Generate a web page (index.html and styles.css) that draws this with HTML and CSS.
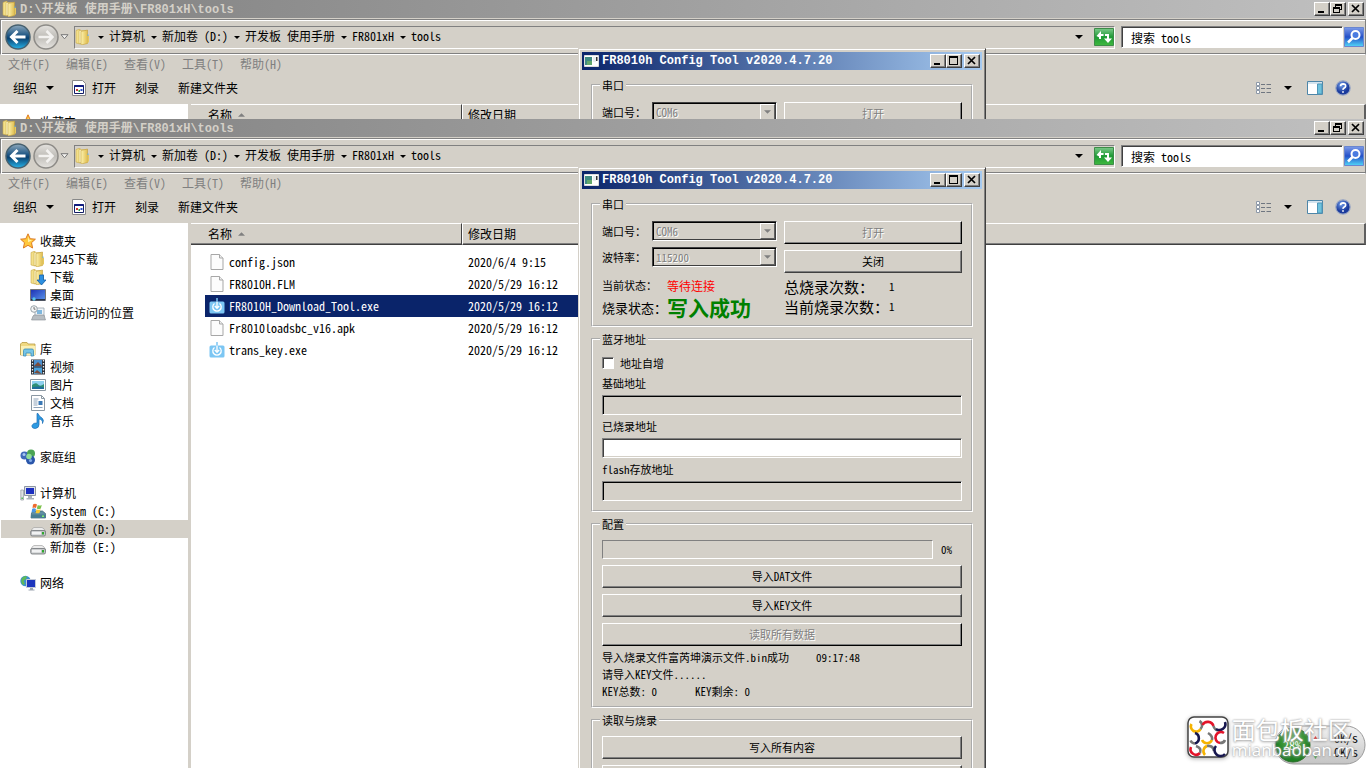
FILE: index.html
```html
<!DOCTYPE html>
<html lang="zh-CN">
<head>
<meta charset="utf-8">
<title>FR8010h Config Tool</title>
<link rel="stylesheet" href="styles.css">
</head>
<body>
<svg class="defs" aria-hidden="true">
  <defs>
    <linearGradient id="gold" x1="0" x2="1"><stop offset="0" stop-color="#fdf3b0"/><stop offset="1" stop-color="#e0bd4e"/></linearGradient>
    <linearGradient id="blueball" x1="0" y1="0" x2="0" y2="1"><stop offset="0" stop-color="#8ea9bd"/><stop offset=".45" stop-color="#1d5583"/><stop offset=".55" stop-color="#0b4170"/><stop offset="1" stop-color="#27b4ea"/></linearGradient>
    <linearGradient id="greyball" x1="0" y1="0" x2="0" y2="1"><stop offset="0" stop-color="#e4e2de"/><stop offset=".5" stop-color="#bfbdb8"/><stop offset="1" stop-color="#e6e4e0"/></linearGradient>
    <linearGradient id="screen" x1="0" y1="0" x2="1" y2="1"><stop offset="0" stop-color="#1b2fb4"/><stop offset="1" stop-color="#5d97ea"/></linearGradient>
    <linearGradient id="greenbtn" x1="0" y1="0" x2="0" y2="1"><stop offset="0" stop-color="#7cc98a"/><stop offset=".5" stop-color="#1f9a35"/><stop offset="1" stop-color="#3fb83f"/></linearGradient>
    <linearGradient id="searchbtn" x1="0" y1="0" x2="0" y2="1"><stop offset="0" stop-color="#7d9be8"/><stop offset=".5" stop-color="#2450c8"/><stop offset="1" stop-color="#52d6f8"/></linearGradient>
    <radialGradient id="helpball" cx=".4" cy=".3"><stop offset="0" stop-color="#6f9be8"/><stop offset="1" stop-color="#1a3a9c"/></radialGradient>
    <radialGradient id="gauge" cx=".5" cy=".35"><stop offset="0" stop-color="#6dbb5e"/><stop offset="1" stop-color="#1d7f22"/></radialGradient>
    <linearGradient id="pill" x1="0" y1="0" x2="0" y2="1"><stop offset="0" stop-color="#f2f2f2"/><stop offset="1" stop-color="#c4c4c4"/></linearGradient>
  </defs>
  <symbol id="i-folder" viewBox="0 0 16 16"><path d="M1 1.5 5 0v15l-4-1z" fill="#f3e08a" stroke="#c9a94a" stroke-width=".6"/><path d="M4 1.5h7v13H4z" fill="#fbf2c0" stroke="#cfae4f" stroke-width=".6"/><path d="M6 2.5 12.5 1v13.500L6 16z" fill="url(#gold)" stroke="#c39d3a" stroke-width=".6"/><path d="M12.500 6.500 14 7v6l-1.500 1.500z" fill="#e6c75c"/><path d="M12.500 5.500h1v1.500h-1z" fill="#5fb0e0"/></symbol>
  <symbol id="i-down" viewBox="0 0 16 16"><use href="#i-folder"/><path d="M9.500 6h4v5H16l-4.500 5L7 11h2.500z" fill="#2d8fe0" stroke="#145ea8" stroke-width=".8"/></symbol>
  <symbol id="i-star" viewBox="0 0 16 16"><path d="m8 .8 2.200 4.900 5.200.5-3.900 3.500 1.100 5.300L8 12.300 3.400 15l1.100-5.300L.6 6.200l5.200-.5z" fill="#ffc83c" stroke="#dd7a22" stroke-width="1"/><path d="m8 3.500 1.200 3.200 3 .5-4.200 2z" fill="#fff2a8"/></symbol>
  <symbol id="i-desk" viewBox="0 0 16 16"><path d="M.5 2.500h15v11H.5z" fill="url(#screen)" stroke="#777"/><path d="M1 12h14v1.500H1z" fill="#26334c"/><circle cx="4" cy="12" r="1.700" fill="#58c5e8"/></symbol>
  <symbol id="i-recent" viewBox="0 0 16 16"><path d="M5 3h9v9H5z" fill="#eef4f8" stroke="#9aa5ae" stroke-width=".8"/><path d="M7 5h5v4H7z" fill="#7fb7dd"/><path d="m3 11 1-1h10l1.500 5H1.500z" fill="#b7bdc2" stroke="#848b90" stroke-width=".6"/><circle cx="4" cy="4" r="3.300" fill="#f4f6f7" stroke="#8f9aa0" stroke-width=".9"/><path d="M4 2v2.200h1.500" fill="none" stroke="#555" stroke-width=".8"/></symbol>
  <symbol id="i-lib" viewBox="0 0 16 16"><path d="M.5 3 2 1.500h5L8 3h7v11H.5z" fill="#f0d982" stroke="#b99c44" stroke-width=".8"/><path d="M1 5h14.500L15 14H1z" fill="#fbf0b5"/><path d="M3.500 15V9.500Q3.500 8 5 8h7q1.500 0 1.500 1.500V15h-2.500v-3H6v3z" fill="#76c4e6" stroke="#3a8db8" stroke-width=".8"/></symbol>
  <symbol id="i-video" viewBox="0 0 16 16"><path d="M1 .5h14v15H1z" fill="#2a2f38"/><path d="M4 1h8v6.500H4z" fill="#4b8fce"/><path d="M4 8.500h8V15H4z" fill="#4aa2dc"/><path d="m4 7 4-4 4 4zM4 14l3-3 5 4z" fill="#7a4b3b"/><path d="M2.500 1v14M13.500 1v14" stroke="#eee" stroke-width="1.300" stroke-dasharray="1.500 1.500"/></symbol>
  <symbol id="i-pic" viewBox="0 0 16 16"><path d="M.5 2.500h15v11H.5z" fill="#fff" stroke="#8b98a3"/><path d="M2 4h12v8H2z" fill="#8fd0ef"/><path d="M2 8q4-3 6-.5T14 7v5H2z" fill="#2f8f74"/><path d="M2 10.500q6-2 12 0V12H2z" fill="#1f6d9c"/></symbol>
  <symbol id="i-doc" viewBox="0 0 16 16"><path d="M1.500.5h10l3 3v12h-13z" fill="#fff" stroke="#8b98a3"/><path d="M11.500.5v3h3" fill="none" stroke="#8b98a3"/><path d="M3.500 4h5M3.500 6h4M3.500 8h4M3.500 10h4M3.500 12.500h9" stroke="#8da2b8"/><path d="M8.500 6h4v4h-4z" fill="#3a78b5"/></symbol>
  <symbol id="i-music" viewBox="0 0 16 16"><path d="M8 .5q1 3 4 4.500 2.500 2 .5 5.500.5-4-3.500-4.500v5.500Q9 15 5.500 15.500 1.500 15.500 2 12.500q1-3 5-2.500V.5z" fill="#2e9be2" stroke="#1a6cb4" stroke-width=".7"/></symbol>
  <symbol id="i-home" viewBox="0 0 16 16"><circle cx="4.500" cy="6.500" r="4" fill="#3f69b9"/><circle cx="11" cy="4.500" r="4" fill="#4ba455"/><circle cx="10.500" cy="11" r="4.500" fill="#2a56aa"/><circle cx="9" cy="7.500" r="2.800" fill="#8fdc97"/><circle cx="4" cy="5.500" r="1.500" fill="#a8c7f2"/><circle cx="10.500" cy="11.500" r="1.600" fill="#7fa8e6"/></symbol>
  <symbol id="i-pc" viewBox="0 0 16 16"><path d="M4.500 1.500h11v9h-11z" fill="#dfe3ea" stroke="#8c95a2"/><path d="M6 3h8v6H6z" fill="#1b2ec0"/><path d="M8 11h4v2h2v1.500H6.500V13H8z" fill="#aab2bd"/><path d="M.8 5h2.700v10H.8z" fill="#dde0e4" stroke="#8f979f" stroke-width=".7"/><path d="M1.500 12.500h1.300V14H1.500z" fill="#36b03c"/></symbol>
  <symbol id="i-sys" viewBox="0 0 16 16"><path d="m1.500 10 2-2h9l3 2.500V15H1z" fill="#5f8fa3" stroke="#3b6272" stroke-width=".7"/><path d="M1 11.500h14.500V15H1z" fill="#487d92"/><path d="M12 12.500h2v1.500h-2z" fill="#7cf06c"/><path d="M3 1.500Q5 0 7 1.500L6 5Q4.500 4 2.500 5z" fill="#ee6a2e"/><path d="M7.800 2q2 1.200 4 0l-1 3.500q-2 1-4 0z" fill="#7cc24c"/><path d="M2.200 5.700q2-1 3.800.3L5 9.500q-2-1-3.500 0z" fill="#4a96e4"/><path d="M6.600 6.200q2 1 4 0l-1 3.500q-2 1-4 0z" fill="#f6c732"/></symbol>
  <symbol id="i-drive" viewBox="0 0 16 16"><path d="M1 10.500Q2 7 4 6.500h8q2 .5 3.500 4z" fill="#ececec" stroke="#999" stroke-width=".6"/><rect x=".7" y="9.500" width="14.800" height="5.500" rx="1.500" fill="#c3c5c7" stroke="#6f7376" stroke-width=".8"/><path d="M2 10.800h9v2.700H2z" fill="#f1f2f3"/><path d="M12 11h2v2.500h-2z" fill="#2fa82e"/></symbol>
  <symbol id="i-net" viewBox="0 0 16 16"><circle cx="5.500" cy="6" r="5.200" fill="#3b8fd1"/><path d="M2 3q3-3 5-1.500L6 4 3.500 6 5 9l-2 1Q0 7 2 3z" fill="#5fba58"/><path d="M6.500 4.500h9v8h-9z" fill="#1d35bd" stroke="#c4cad6"/><path d="M10 13h3v1.500h1.500v1h-6v-1H10z" fill="#9da6b2"/></symbol>
  <symbol id="i-file" viewBox="0 0 16 16"><path d="M2 .5h8.500l3.500 3.500v11.500H2z" fill="#fcfcfc" stroke="#a7a7a7"/><path d="M10.500.5V4H14" fill="#eee" stroke="#a7a7a7"/></symbol>
  <symbol id="i-exe" viewBox="0 0 16 16"><path d="M.5 5q0-1.500 1.500-1.500h12q1.500 0 1.500 1.500v9q0 1.500-1.500 1.500H2Q.5 15.500 .5 14z" fill="#7cc6f3"/><path d="M5.500 5.500a4.200 4.200 0 1 0 5 0" fill="none" stroke="#fff" stroke-width="1.300"/><path d="M8 3.500v6.500M5.800 8 8 10.300 10.200 8" fill="none" stroke="#fff" stroke-width="1.300"/><path d="M8 0v3.500" stroke="#7cc6f3" stroke-width="1.500"/></symbol>
  <symbol id="i-app" viewBox="0 0 14 16"><path d="M.5.5h10l3 3v12H.5z" fill="#fff" stroke="#888"/><path d="M2.500 5.500h9v8h-9z" fill="#fff" stroke="#111c66"/><path d="M2.500 5h9v2h-9z" fill="#111c80"/><path d="M4 9h2v2H4z" fill="#c33"/><path d="M6.500 10h1.500v2H6.500z" fill="#2a9d3a"/><path d="M8.500 9h2v2h-2z" fill="#2c50c8"/></symbol>
  <symbol id="i-back" viewBox="0 0 26 26"><circle cx="13" cy="13" r="12" fill="url(#blueball)" stroke="#47616f" stroke-width="1.500"/><path d="M20.500 13H7M12.500 7 6.500 13l6 6" fill="none" stroke="#fff" stroke-width="3"/></symbol>
  <symbol id="i-fwd" viewBox="0 0 26 26"><circle cx="13" cy="13" r="12" fill="url(#greyball)" stroke="#8d8b87" stroke-width="1.500"/><path d="M5.500 13H19M13.500 7l6 6-6 6" fill="none" stroke="#f3f2f0" stroke-width="2.500"/></symbol>
  <symbol id="i-tri" viewBox="0 0 9 6"><path d="M1 .7h7L4.500 4.800z" fill="#f4f3f0" stroke="#777"/></symbol>
  <symbol id="i-arrow" viewBox="0 0 8 4"><path d="M0 0h8L4 4z" fill="currentColor"/></symbol>
  <symbol id="i-refresh" viewBox="0 0 20 18"><path d="M.5.500h19v17H.5z" fill="url(#greenbtn)" stroke="#3d8c48"/><path d="M2.500 8 7 3v3h2.500v2H7v2.500z" fill="#fff"/><path d="M6 7v4M14 11V7h-3" fill="none" stroke="#fff" stroke-width="2"/><path d="m10 10.500 4 4.500 4-4.500z" fill="#fff"/></symbol>
  <symbol id="i-search" viewBox="0 0 20 20"><path d="M.5.500h19v19H.5z" fill="url(#searchbtn)" stroke="#6a86cf"/><circle cx="11.500" cy="8" r="4" fill="#4a7be0" stroke="#fff" stroke-width="2"/><path d="m8.500 11-4.500 4.500" stroke="#fff" stroke-width="2.500"/></symbol>
  <symbol id="i-views" viewBox="0 0 16 13"><path d="M.5.500h3v3h-3zM.5 4.500h3v3h-3zM.5 8.500h3v3h-3z" fill="#fff" stroke="#8c98a8"/><path d="M5 2.500h4M10.500 2.500h4.500M5 6.500h4M10.500 6.500h4.500M5 10.500h4M10.500 10.500h4.500" stroke="#6f7680"/></symbol>
  <symbol id="i-pane" viewBox="0 0 16 14"><path d="M.5.500h15v13H.5z" fill="#fff" stroke="#4e86a8"/><path d="M1 1h14v2H1z" fill="#d4e4ee"/><path d="M10.500 3h4.500v10h-4.500z" fill="#6ec2dc" stroke="#4e96b8"/></symbol>
  <symbol id="i-help" viewBox="0 0 16 16"><circle cx="8" cy="8" r="7.200" fill="url(#helpball)" stroke="#9aa7c4" stroke-width="1.200"/><path d="M5.500 6.300q.2-2.500 2.600-2.500 2.600.1 2.500 2.300-.1 1.200-1.400 2-1.200.7-1.100 1.700M8 11.200v1.600" fill="none" stroke="#fff" stroke-width="1.700"/></symbol>
  <symbol id="i-min" viewBox="0 0 12 10"><path d="M2 7h6v2H2z"/></symbol>
  <symbol id="i-max" viewBox="0 0 12 10"><path d="M1 0h9v9H1zm1 2v6h7V2z" fill-rule="evenodd"/></symbol>
  <symbol id="i-restore" viewBox="0 0 12 10"><path d="M3 0h7v6H8v3H1V3h2zm1 2v1h4v2h1V2zM2 5v3h5V5z" fill-rule="evenodd"/></symbol>
  <symbol id="i-close" viewBox="0 0 12 10"><path d="m2 1 7 7M9 1 2 8" fill="none" stroke="#000" stroke-width="1.700"/></symbol>
  <symbol id="i-tool" viewBox="0 0 15 12"><path d="M.5.500h14v11H.5z" fill="#fff" stroke="#ddd"/><path d="M1 2h7v8H1z" fill="#3f8a82"/><path d="M3 6h5v4H3z" fill="#63a86c"/><path d="M9 2h3v5H9z" fill="#e9eef1"/><path d="M12 2h1.500v4H12z" fill="#333"/></symbol>
</svg>

<main class="stack">
  <section class="screen screen-top" aria-label="上方截屏">
    <div class="explorer">
      <header class="titlebar inactive">
        <svg class="ic16"><use href="#i-folder"/></svg>
        <span class="title">D:\开发板 使用手册\FR801xH\tools</span>
        <button class="winbtn" aria-label="最小化"><svg><use href="#i-min"/></svg></button>
        <button class="winbtn" aria-label="还原"><svg><use href="#i-restore"/></svg></button>
        <button class="winbtn close" aria-label="关闭窗口"><svg><use href="#i-close"/></svg></button>
      </header>
      <div class="addressrow">
        <button class="ball" aria-label="后退"><svg><use href="#i-back"/></svg></button>
        <button class="ball" aria-label="前进"><svg><use href="#i-fwd"/></svg></button>
        <svg class="tri"><use href="#i-tri"/></svg>
        <nav class="address" aria-label="地址">
          <svg class="ic16"><use href="#i-folder"/></svg>
          <svg class="crumb first"><use href="#i-arrow"/></svg><a href="#">计算机</a>
          <svg class="crumb"><use href="#i-arrow"/></svg><a href="#">新加卷 (D:)</a>
          <svg class="crumb"><use href="#i-arrow"/></svg><a href="#">开发板 使用手册</a>
          <svg class="crumb"><use href="#i-arrow"/></svg><a href="#">FR801xH</a>
          <svg class="crumb"><use href="#i-arrow"/></svg><a href="#">tools</a>
          <svg class="drop"><use href="#i-arrow"/></svg>
          <button class="refresh" aria-label="刷新"><svg><use href="#i-refresh"/></svg></button>
        </nav>
        <input class="search" type="text" placeholder="搜索 tools" aria-label="搜索">
        <button class="go" aria-label="开始搜索"><svg><use href="#i-search"/></svg></button>
      </div>
      <nav class="menubar" aria-label="菜单">
        <a href="#">文件(F)</a><a href="#">编辑(E)</a><a href="#">查看(V)</a><a href="#">工具(T)</a><a href="#">帮助(H)</a>
      </nav>
      <div class="toolbar">
        <button class="organize">组织<svg class="drop"><use href="#i-arrow"/></svg></button>
        <button class="open"><svg class="app"><use href="#i-app"/></svg>打开</button>
        <button>刻录</button>
        <button>新建文件夹</button>
        <span class="spring"></span>
        <svg class="views"><use href="#i-views"/></svg>
        <svg class="drop"><use href="#i-arrow"/></svg>
        <svg class="pane"><use href="#i-pane"/></svg>
        <svg class="ic16"><use href="#i-help"/></svg>
      </div>
      <div class="panes">
        <ul class="tree"><li><svg class="ic16"><use href="#i-star"/></svg>收藏夹</li></ul>
        <div class="files">
          <table><thead><tr><th class="c-name">名称<svg class="sort"><use href="#i-arrow"/></svg></th><th class="c-date">修改日期</th><th></th></tr></thead></table>
        </div>
      </div>
    </div>
    <div class="dialog">
      <header class="titlebar active">
        <svg class="tool"><use href="#i-tool"/></svg>
        <span class="title">FR8010h Config Tool v2020.4.7.20</span>
        <button class="winbtn" aria-label="最小化"><svg><use href="#i-min"/></svg></button>
        <button class="winbtn" aria-label="最大化"><svg><use href="#i-max"/></svg></button>
        <button class="winbtn close" aria-label="关闭窗口"><svg><use href="#i-close"/></svg></button>
      </header>
      <div class="body">
        <fieldset class="port">
          <legend>串口</legend>
          <div class="left">
            <label class="pair"><span>端口号：</span><span class="combo"><select disabled><option>COM6</option></select><i><svg><use href="#i-arrow"/></svg></i></span></label>
          </div>
          <div class="right"><button class="btn" disabled>打开</button></div>
        </fieldset>
      </div>
    </div>
  </section>

  <section class="screen screen-main" aria-label="下方截屏">
    <div class="explorer">
      <header class="titlebar inactive">
        <svg class="ic16"><use href="#i-folder"/></svg>
        <span class="title">D:\开发板 使用手册\FR801xH\tools</span>
        <button class="winbtn" aria-label="最小化"><svg><use href="#i-min"/></svg></button>
        <button class="winbtn" aria-label="还原"><svg><use href="#i-restore"/></svg></button>
        <button class="winbtn close" aria-label="关闭窗口"><svg><use href="#i-close"/></svg></button>
      </header>
      <div class="addressrow">
        <button class="ball" aria-label="后退"><svg><use href="#i-back"/></svg></button>
        <button class="ball" aria-label="前进"><svg><use href="#i-fwd"/></svg></button>
        <svg class="tri"><use href="#i-tri"/></svg>
        <nav class="address" aria-label="地址">
          <svg class="ic16"><use href="#i-folder"/></svg>
          <svg class="crumb first"><use href="#i-arrow"/></svg><a href="#">计算机</a>
          <svg class="crumb"><use href="#i-arrow"/></svg><a href="#">新加卷 (D:)</a>
          <svg class="crumb"><use href="#i-arrow"/></svg><a href="#">开发板 使用手册</a>
          <svg class="crumb"><use href="#i-arrow"/></svg><a href="#">FR801xH</a>
          <svg class="crumb"><use href="#i-arrow"/></svg><a href="#">tools</a>
          <svg class="drop"><use href="#i-arrow"/></svg>
          <button class="refresh" aria-label="刷新"><svg><use href="#i-refresh"/></svg></button>
        </nav>
        <input class="search" type="text" placeholder="搜索 tools" aria-label="搜索">
        <button class="go" aria-label="开始搜索"><svg><use href="#i-search"/></svg></button>
      </div>
      <nav class="menubar" aria-label="菜单">
        <a href="#">文件(F)</a><a href="#">编辑(E)</a><a href="#">查看(V)</a><a href="#">工具(T)</a><a href="#">帮助(H)</a>
      </nav>
      <div class="toolbar">
        <button class="organize">组织<svg class="drop"><use href="#i-arrow"/></svg></button>
        <button class="open"><svg class="app"><use href="#i-app"/></svg>打开</button>
        <button>刻录</button>
        <button>新建文件夹</button>
        <span class="spring"></span>
        <svg class="views"><use href="#i-views"/></svg>
        <svg class="drop"><use href="#i-arrow"/></svg>
        <svg class="pane"><use href="#i-pane"/></svg>
        <svg class="ic16"><use href="#i-help"/></svg>
      </div>
      <div class="panes">
        <ul class="tree">
          <li><svg class="ic16"><use href="#i-star"/></svg>收藏夹</li>
          <li class="sub"><svg class="ic16"><use href="#i-folder"/></svg>2345下载</li>
          <li class="sub"><svg class="ic16"><use href="#i-down"/></svg>下载</li>
          <li class="sub"><svg class="ic16"><use href="#i-desk"/></svg>桌面</li>
          <li class="sub"><svg class="ic16"><use href="#i-recent"/></svg>最近访问的位置</li>
          <li class="sec"><svg class="ic16"><use href="#i-lib"/></svg>库</li>
          <li class="sub"><svg class="ic16"><use href="#i-video"/></svg>视频</li>
          <li class="sub"><svg class="ic16"><use href="#i-pic"/></svg>图片</li>
          <li class="sub"><svg class="ic16"><use href="#i-doc"/></svg>文档</li>
          <li class="sub"><svg class="ic16"><use href="#i-music"/></svg>音乐</li>
          <li class="sec"><svg class="ic16"><use href="#i-home"/></svg>家庭组</li>
          <li class="sec"><svg class="ic16"><use href="#i-pc"/></svg>计算机</li>
          <li class="sub"><svg class="ic16"><use href="#i-sys"/></svg>System (C:)</li>
          <li class="sub current"><svg class="ic16"><use href="#i-drive"/></svg>新加卷 (D:)</li>
          <li class="sub"><svg class="ic16"><use href="#i-drive"/></svg>新加卷 (E:)</li>
          <li class="sec"><svg class="ic16"><use href="#i-net"/></svg>网络</li>
        </ul>
        <div class="files">
          <table>
            <thead><tr><th class="c-name">名称<svg class="sort"><use href="#i-arrow"/></svg></th><th class="c-date">修改日期</th><th></th></tr></thead>
            <tbody>
              <tr><td><svg class="ic16"><use href="#i-file"/></svg>config.json</td><td>2020/6/4 9:15</td></tr>
              <tr><td><svg class="ic16"><use href="#i-file"/></svg>FR8010H.FLM</td><td>2020/5/29 16:12</td></tr>
              <tr class="selected"><td><svg class="ic16"><use href="#i-exe"/></svg>FR8010H_Download_Tool.exe</td><td>2020/5/29 16:12</td></tr>
              <tr><td><svg class="ic16"><use href="#i-file"/></svg>Fr8010loadsbc_v16.apk</td><td>2020/5/29 16:12</td></tr>
              <tr><td><svg class="ic16"><use href="#i-exe"/></svg>trans_key.exe</td><td>2020/5/29 16:12</td></tr>
            </tbody>
          </table>
        </div>
      </div>
    </div>

    <div class="dialog">
      <header class="titlebar active">
        <svg class="tool"><use href="#i-tool"/></svg>
        <span class="title">FR8010h Config Tool v2020.4.7.20</span>
        <button class="winbtn" aria-label="最小化"><svg><use href="#i-min"/></svg></button>
        <button class="winbtn" aria-label="最大化"><svg><use href="#i-max"/></svg></button>
        <button class="winbtn close" aria-label="关闭窗口"><svg><use href="#i-close"/></svg></button>
      </header>
      <div class="body">
        <fieldset class="port">
          <legend>串口</legend>
          <div class="left">
            <label class="pair"><span>端口号：</span><span class="combo"><select disabled><option>COM6</option></select><i><svg><use href="#i-arrow"/></svg></i></span></label>
            <label class="pair"><span>波特率：</span><span class="combo"><select disabled><option>115200</option></select><i><svg><use href="#i-arrow"/></svg></i></span></label>
            <p class="state"><span>当前状态：</span><strong class="wait">等待连接</strong></p>
            <p class="state burn"><span>烧录状态：</span><strong class="ok">写入成功</strong></p>
          </div>
          <div class="right">
            <button class="btn" disabled>打开</button>
            <button class="btn">关闭</button>
            <p class="count"><span>总烧录次数：</span><b>1</b></p>
            <p class="count"><span>当前烧录次数：</span><b>1</b></p>
          </div>
        </fieldset>

        <fieldset class="addr">
          <legend>蓝牙地址</legend>
          <label class="check"><input type="checkbox">地址自增</label>
          <label class="field">基础地址<input type="text" disabled></label>
          <label class="field">已烧录地址<input type="text"></label>
          <label class="field">flash存放地址<input type="text" disabled></label>
        </fieldset>

        <fieldset class="config">
          <legend>配置</legend>
          <div class="progress"><div class="track" role="progressbar" aria-label="进度" aria-valuenow="0"></div>0%</div>
          <button class="btn">导入DAT文件</button>
          <button class="btn">导入KEY文件</button>
          <button class="btn" disabled>读取所有数据</button>
          <div class="log">
            <p><span>导入烧录文件富芮坤演示文件.bin成功</span><span>09:17:48</span></p>
            <p>请导入KEY文件......</p>
            <p class="keys"><span>KEY总数: 0</span><span>KEY剩余: 0</span></p>
          </div>
        </fieldset>

        <fieldset class="config">
          <legend>读取与烧录</legend>
          <button class="btn">写入所有内容</button>
          <button class="btn" aria-label="更多操作"></button>
        </fieldset>
      </div>
    </div>

    <aside class="meter">
      <svg class="meterbg" viewBox="0 0 92 42"><path d="M20 2h52a19 19 0 0 1 0 38H20a19 19 0 0 1 0-38z" fill="url(#pill)" stroke="#9a9a9a"/><circle cx="19" cy="21" r="17" fill="url(#gauge)" stroke="#2c6e2c"/><path d="m39 16 2.500-4 2.500 4z" fill="#e03c3c"/><path d="m39 31 2.500 4 2.500-4z" fill="#49a149"/></svg>
      <span class="percent">28%</span>
      <span class="rates"><span>0K/s</span><span>0K/s</span></span>
    </aside>
    <aside class="mark">
      <svg class="logo" viewBox="0 0 42 42">
        <rect x="1" y="1" width="40" height="40" rx="6" fill="#fff" stroke="#444" stroke-width="1.500"/>
        <g fill="none" stroke-width="2.600">
          <path d="M4.500 8a5 5 0 0 0 9 5" stroke="#f5b300"/><path d="M13.500 13a5 5 0 0 0-1-8" stroke="#777"/>
          <path d="M15.500 9a6 6 0 0 1 11 1" stroke="#e3142a"/><path d="M26.500 10q1 4 5 4.500" stroke="#777"/>
          <path d="M38 6a6 6 0 0 1-9 7" stroke="#17174f"/>
          <path d="M8 17a5.500 5.500 0 0 1 0 10.500" stroke="#17174f"/><path d="M8 27.500q-3 0-4.500-3" stroke="#777"/>
          <path d="M15 24a5.500 5.500 0 0 0 10 0" stroke="#f5b300"/><path d="M25 24q1-4-4-7" stroke="#777"/>
          <path d="M37 17a5.500 5.500 0 1 0-4 10" stroke="#e3142a"/><path d="M33 27q4 0 5-3" stroke="#777"/>
          <path d="M4 31a5.500 5.500 0 0 0 9 6" stroke="#e3142a"/><path d="M13 37q2-5-4-7" stroke="#777"/>
          <path d="M20 30a5.500 5.500 0 0 0-2 9" stroke="#f5b300"/><path d="M20 30q6-1 7 5" stroke="#777"/>
          <path d="M29 30a5.500 5.500 0 0 0 9 8" stroke="#17174f"/>
        </g>
      </svg>
      <span class="marktext"><span class="cn">面包板社区</span><span class="en">mianbaoban.cn</span></span>
    </aside>
  </section>
</main>
</body>
</html>
```
FILE: styles.css
```css
* { box-sizing: border-box; }
html, body { height: 100%; margin: 0; }
body {
  background: #fff;
  color: #000;
  font: 12px/18px "Noto Sans Mono CJK SC", "Liberation Mono", "Noto Sans CJK SC", monospace;
  overflow: hidden;
}
button, input, select { font: inherit; color: inherit; margin: 0; }
button { border: 0; padding: 0; background: none; }
svg { display: block; flex: none; }
a { color: inherit; text-decoration: none; }
p, ul { margin: 0; padding: 0; }
.defs { position: absolute; width: 0; height: 0; }
.ic16 { width: 16px; height: 16px; }

.stack { display: flex; flex-direction: column; height: 100vh; }
.screen { position: relative; overflow: hidden; }
.screen-top { flex: 0 0 119px; }
.screen-main { flex: 1; }

.explorer { display: flex; flex-direction: column; height: 100%; background: #d4d0c8; }
.titlebar { display: flex; align-items: center; height: 18px; padding: 0 2px; flex: none; }
.titlebar .title {
  flex: 1;
  white-space: nowrap;
  font: bold 12px/18px "Liberation Mono", "Noto Sans CJK SC", monospace;
}
.inactive { background: linear-gradient(90deg, #808080, #c0c0c0); color: #d4d0c8; }
.inactive .title { padding: 1px 0 0 2px; }
.active { background: linear-gradient(90deg, #0a246a, #a6caf0); color: #fff; }
.active .title { padding-left: 3px; }
.tool { width: 15px; height: 12px; }
.winbtn {
  width: 16px;
  height: 14px;
  padding: 1px;
  background: #d4d0c8;
  border: 1px solid;
  border-color: #fff #404040 #404040 #fff;
  box-shadow: inset -1px -1px #808080;
}
.winbtn svg { width: 12px; height: 10px; }
.winbtn.close { margin-left: 2px; }

.addressrow {
  display: flex;
  align-items: center;
  height: 36px;
  flex: none;
  margin-top: 1px;
  padding: 0 1px 0 4px;
  border: 1px solid;
  border-color: #808080 #808080 #fff;
  box-shadow: inset 1px 1px #fff, inset 0 -1px #808080;
}
.ball { margin-right: 2px; }
.ball svg { width: 26px; height: 26px; }
.tri { width: 9px; height: 6px; margin: 0 5px 0 -1px; }
.address {
  flex: 1;
  display: flex;
  align-items: center;
  height: 23px;
  margin-right: 6px;
  border: 1px solid;
  border-color: #808080 #fff #fff #808080;
  white-space: nowrap;
}
.address a { padding-bottom: 3px; }
.crumb { width: 6px; height: 3px; margin: 0 5px 0 6px; }
.crumb.first { margin-left: 7px; }
.drop { width: 8px; height: 4px; }
.address .drop { margin: 0 11px 0 auto; }
.refresh svg { width: 20px; height: 18px; }
.search {
  width: 222px;
  height: 22px;
  padding: 0 9px;
  background: #fff;
  border: 1px solid;
  border-color: #808080 #fff #fff #808080;
  box-shadow: inset 1px 1px #404040;
}
.search::placeholder { color: #000; opacity: 1; }
.go { margin-left: 1px; }
.go svg { width: 20px; height: 20px; }

.menubar { display: flex; gap: 16px; height: 19px; flex: none; padding: 0 8px; color: #808080; }
.toolbar { display: flex; align-items: center; height: 30px; flex: none; padding: 0 15px 2px 13px; }
.toolbar button { display: flex; align-items: center; margin-right: 19px; }
.toolbar .organize { gap: 9px; margin-right: 18px; }
.toolbar .open { gap: 6px; }
.app { width: 14px; height: 16px; }
.spring { flex: 1; }
.views { width: 16px; height: 13px; }
.toolbar > .drop { margin: 0 15px 0 12px; }
.pane { width: 16px; height: 14px; margin-right: 12px; }

.panes { display: flex; flex: 1; min-height: 0; }
.tree { width: 188px; flex: none; padding: 9px 0 0 1px; background: #fff; list-style: none; }
.tree li { display: flex; align-items: center; gap: 4px; height: 18px; padding-left: 19px; }
.tree .sub { padding-left: 29px; }
.tree .sec { margin-top: 18px; }
.tree .current { background: #d4d0c8; }
.files { flex: 1; margin-left: 3px; background: #fff; }
table { width: 100%; table-layout: fixed; border-collapse: separate; border-spacing: 0; }
th {
  height: 22px;
  padding: 0 6px;
  background: #d4d0c8;
  border-top: 1px solid #fff;
  border-bottom: 1px solid #404040;
  box-shadow: inset 0 -1px #808080;
  font-weight: normal;
  text-align: left;
}
th:last-child { border-right: 2px solid #606060; }
.c-name { width: 271px; padding-left: 17px; border-right: 1px solid #404040; }
.c-date { width: 150px; border-left: 1px solid #fff; padding-left: 5px; }
.sort { display: inline-block; width: 7px; height: 4px; margin-left: 6px; color: #808080; transform: rotate(180deg); vertical-align: 3px; }
tbody::before { content: ""; display: block; height: 6px; }
td { height: 22px; padding: 0 6px; }
td:first-child { display: flex; align-items: center; gap: 4px; margin-left: 14px; padding: 0 4px; }
.selected td { background: #0a246a; color: #fff; }

.dialog {
  position: absolute;
  top: 48px;
  left: 578px;
  width: 408px;
  padding: 2px;
  background: #d4d0c8;
  border: 1px solid;
  border-color: #d4d0c8 #404040 #404040 #d4d0c8;
  box-shadow: inset 1px 1px #fff, inset -1px -1px #808080;
}
.dialog .titlebar { margin: 1px; }
.body { display: flex; flex-direction: column; gap: 6px; padding: 8px 10px; font-size: 11px; line-height: 17px; }
fieldset {
  min-width: 0;
  margin: 0;
  padding: 10px 9px 6px;
  border: 2px groove #fff;
}
legend { margin-left: -2px; padding: 0 2px; line-height: 12px; }
.port { display: grid; grid-template-columns: 175px 1fr; column-gap: 7px; padding-top: 11px; }
.left { display: flex; flex-direction: column; }
.pair { display: grid; grid-template-columns: 50px 1fr; align-items: center; height: 20px; margin-bottom: 6px; white-space: nowrap; }
.combo { position: relative; display: block; height: 20px; }
.combo select {
  appearance: none;
  width: 100%;
  height: 20px;
  padding: 0 3px;
  background: #d4d0c8;
  color: #808080;
  opacity: 1;
  border: 1px solid;
  border-color: #404040 #fff #fff #404040;
  border-radius: 0;
  box-shadow: inset 1px 1px #000, inset -1px -1px #404040;
  text-shadow: 1px 1px #fff;
}
.combo i {
  position: absolute;
  top: 2px;
  right: 2px;
  width: 15px;
  height: 16px;
  padding: 5px 3px;
  background: #d4d0c8;
  color: #808080;
  border: 1px solid;
  border-color: #fff #606060 #606060 #fff;
}
.combo i svg { width: 7px; height: 4px; }
.state { display: grid; grid-template-columns: 65px 1fr; align-items: center; height: 20px; margin-top: 2px; white-space: nowrap; }
.burn { height: 24px; margin-top: 0; font-size: 13px; }
.wait { color: #f00; font-size: 12px; font-weight: normal; }
.ok { color: #008000; font-size: 21px; }
.right { display: flex; flex-direction: column; }
.btn {
  width: 100%;
  height: 23px;
  margin-bottom: 6px;
  background: #d4d0c8;
  border: 1px solid;
  border-color: #fff #404040 #404040 #fff;
  box-shadow: inset -1px -1px #808080;
}
.btn:disabled { color: #808080; text-shadow: 1px 1px #fff; border-right-color: #000; border-bottom-color: #000; }
.count { display: grid; grid-template-columns: 105px 1fr; align-items: center; height: 20px; font-size: 15px; white-space: nowrap; }
.count:nth-of-type(1) { margin-top: -3px; }
.count b { font-size: 11px; font-weight: normal; }

.addr { padding-top: 9px; padding-bottom: 9px; }
.check { display: flex; align-items: center; gap: 6px; height: 18px; }
.check input {
  appearance: none;
  width: 12px;
  height: 12px;
  background: #fff;
  border: 1px solid;
  border-color: #808080 #fff #fff #808080;
  box-shadow: inset 1px 1px #404040;
}
.field { display: block; line-height: 23px; }
.field input {
  display: block;
  width: 100%;
  height: 20px;
  background: #fff;
  border: 1px solid;
  border-color: #808080 #fff #fff #808080;
  box-shadow: inset 1px 1px #404040, inset -1px -1px #d4d0c8;
}
.field input:disabled { background: #d4d0c8; box-shadow: inset 1px 1px #000; }
.progress { display: flex; align-items: center; gap: 8px; height: 19px; margin-bottom: 6px; padding-right: 10px; }
.track { flex: 1; height: 19px; border: 1px solid; border-color: #808080 #fff #fff #808080; }
.log { margin-top: -3px; }
.log p { display: flex; gap: 27px; white-space: nowrap; }
.log .keys { gap: 38px; }

.meter { position: absolute; right: 0; bottom: 2px; width: 92px; height: 42px; }
.meterbg { width: 92px; height: 42px; }
.percent { position: absolute; top: 12px; left: 9px; color: #fff; }
.rates { position: absolute; top: 7px; right: 8px; display: flex; flex-direction: column; line-height: 14px; }
.mark { position: absolute; right: 11px; bottom: 10px; display: flex; align-items: center; gap: 3px; font-family: "Noto Sans CJK SC", sans-serif; }
.logo { width: 42px; height: 42px; filter: drop-shadow(0 1px 2px #aaa); }
.marktext { display: flex; flex-direction: column; color: #fff; text-shadow: 0 0 2px #999, 0 1px 3px #aaa; white-space: nowrap; }
.cn { font-size: 24px; line-height: 26px; }
.en { font-family: "Open Sans", sans-serif; font-size: 17px; line-height: 16px; }
```
